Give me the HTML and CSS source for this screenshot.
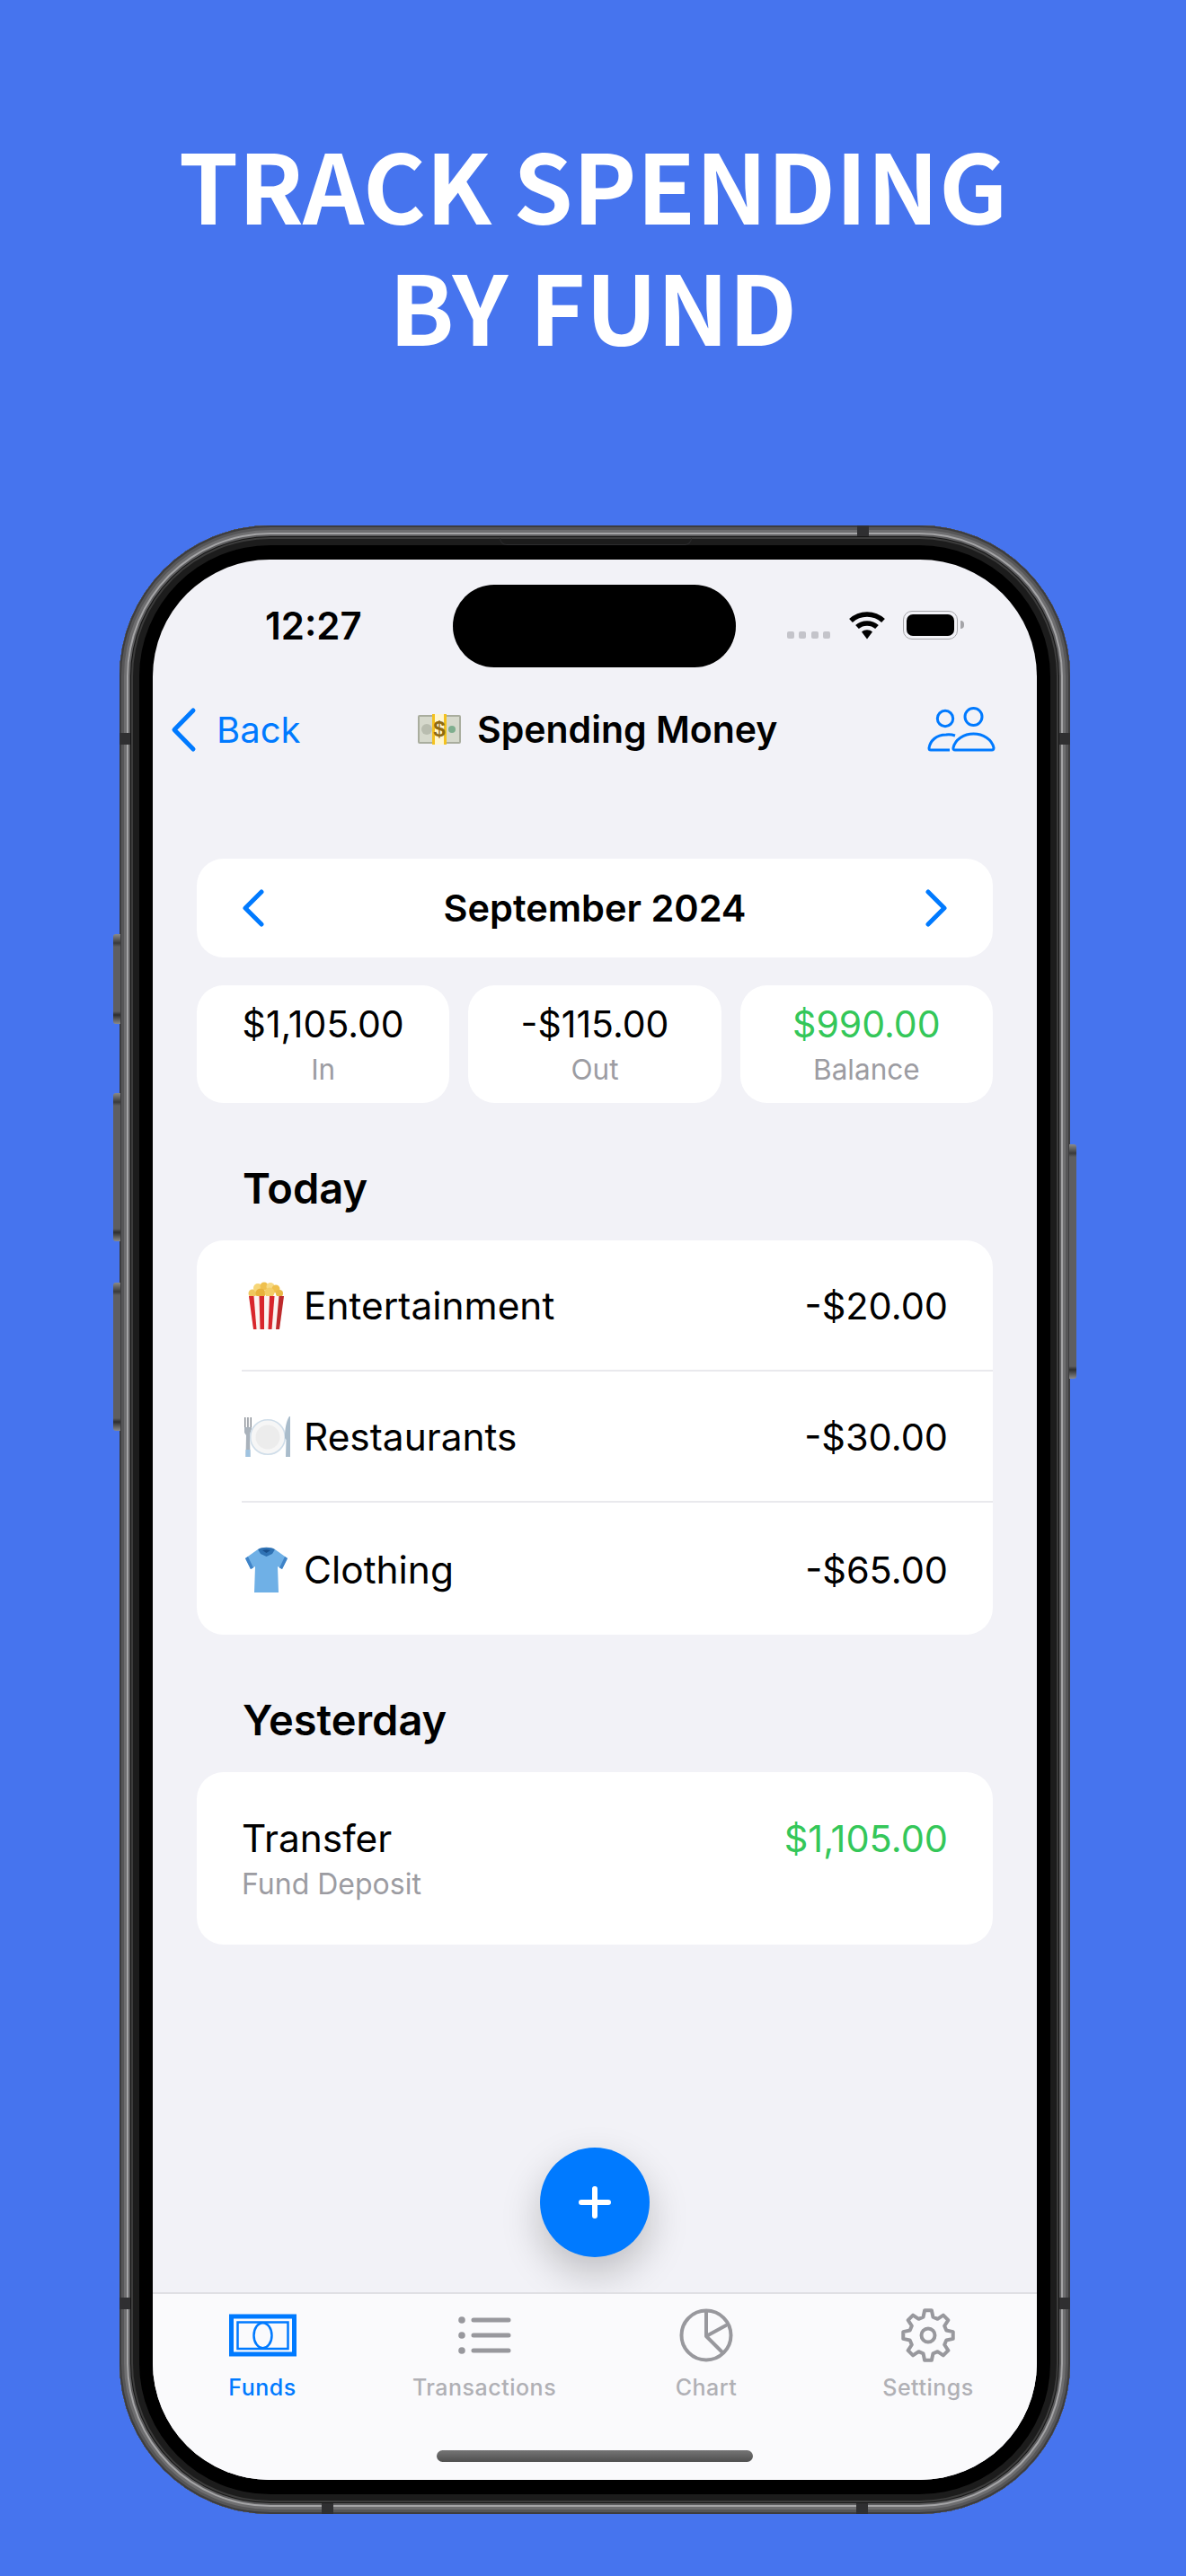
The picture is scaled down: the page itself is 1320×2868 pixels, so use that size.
FILE: index.html
```html
<!DOCTYPE html>
<html lang="en">

<head>
    <meta charset="UTF-8">
    <title>Track Spending by Fund</title>
    <link rel="stylesheet" href="styles.css">
</head>

<body>
    <h1>TRACK SPENDING<br>BY FUND</h1>

    <div class="phone">
        <!-- hardware bits that sit on the frame -->
        <span class="btn btn-mute"></span>
        <span class="btn btn-up"></span>
        <span class="btn btn-down"></span>
        <span class="btn btn-power"></span>
        <span class="band band-left-top"></span>
        <span class="band band-left-bottom"></span>
        <span class="band band-right-top"></span>
        <span class="band band-right-bottom"></span>
        <span class="band band-top"></span>
        <span class="band band-bottom-left"></span>
        <span class="band band-bottom-right"></span>
        <span class="speaker"></span>

        <div class="screen">
            <div class="island"></div>

            <div class="status">
                <span class="time">12:27</span>
                <div class="status-icons">
                    <div class="dots"><i></i><i></i><i></i><i></i></div>
                    <svg class="wifi" width="42" height="32" viewBox="0 0 41 32">
                        <path class="wifi-arc" d="M2.5 11 C12.5 1.5 28.5 1.5 38.5 11" />
                        <path class="wifi-arc" d="M9.5 18 C15.5 12.5 25.5 12.5 31.5 18" />
                        <path d="M14.5 23.5 C18 20.5 23 20.5 26.5 23.5 L20.5 31.5 Z" />
                    </svg>
                    <div class="battery"><i></i></div>
                    <span class="battery-nub"></span>
                </div>
            </div>

            <div class="nav">
                <div class="nav-back">
                    <svg class="icon-line" width="29" height="51" viewBox="0 0 29 51">
                        <path d="M25 4 L4 25.500 L25 47" />
                    </svg>
                    <span>Back</span>
                </div>
                <div class="nav-title">
                    <svg class="emoji-money" width="50" height="36" viewBox="0 0 50 36">
                        <rect x="1" y="2" width="48" height="32" rx="2" fill="#a9ad9e" />
                        <rect x="3" y="4" width="44" height="28" fill="#d6d9cc" />
                        <circle cx="11" cy="18" r="6" fill="#b9bdaf" />
                        <circle cx="39" cy="18" r="4" fill="#7fae8e" />
                        <rect x="17" y="1" width="16" height="34" fill="#fff6cf" />
                        <rect x="17" y="1" width="3" height="34" fill="#f4c21f" />
                        <rect x="30" y="1" width="3" height="34" fill="#f4c21f" />
                        <text x="25" y="26" class="emoji-dollar">$</text>
                    </svg>
                    <span>Spending Money</span>
                </div>
                <svg class="nav-people" width="76" height="50" viewBox="0 0 76 50">
                    <circle cx="20" cy="13" r="8.700" />
                    <circle cx="51.500" cy="11" r="9.500" />
                    <path d="M31 32 C28 31 24 30.500 21 31 C10 31 3 38 2 46 Q2 48 4 48 H25" />
                    <path d="M31 48 Q28.500 48 29 45.500 C31 36 41 30 51.500 30 C62 30 72 36 74 45.500 Q74 48 72 48 Z" />
                </svg>
            </div>

            <main class="content">
                <div class="month">
                    <svg class="icon-line" width="26" height="42" viewBox="0 0 26 42">
                        <path d="M22 3 L4 21 L22 39" />
                    </svg>
                    <span>September 2024</span>
                    <svg class="icon-line" width="26" height="42" viewBox="0 0 26 42">
                        <path d="M4 3 L22 21 L4 39" />
                    </svg>
                </div>

                <div class="stats">
                    <div class="stat">
                        <div class="stat-value">$1,105.00</div>
                        <div class="stat-label">In</div>
                    </div>
                    <div class="stat">
                        <div class="stat-value">-$115.00</div>
                        <div class="stat-label">Out</div>
                    </div>
                    <div class="stat">
                        <div class="stat-value green">$990.00</div>
                        <div class="stat-label">Balance</div>
                    </div>
                </div>

                <h2>Today</h2>
                <div class="card">
                    <div class="row">
                        <div class="row-emoji">
                            <svg width="52" height="54" viewBox="0 0 52 54">
                                <circle cx="12" cy="13" r="4.500" fill="#efc75e" />
                                <circle cx="18" cy="7" r="5" fill="#f6d678" />
                                <circle cx="25" cy="5" r="4.500" fill="#efc04d" />
                                <circle cx="32" cy="5.500" r="4.500" fill="#f7da85" />
                                <circle cx="38" cy="8" r="4.500" fill="#efc04d" />
                                <circle cx="42" cy="13" r="4" fill="#e9b846" />
                                <circle cx="21" cy="13" r="5.500" fill="#e8b23c" />
                                <circle cx="31" cy="12" r="5.500" fill="#f3cd66" />
                                <path d="M8 16 H47 L42 53 H13 Z" fill="#fbf3f1" />
                                <path d="M8 16 H13.500 L16.500 53 H13 Z" fill="#d8262c" />
                                <path d="M19.500 16 H25 L25 53 H20.500 Z" fill="#d8262c" />
                                <path d="M31 16 H36.500 L33.500 53 H29.500 Z" fill="#d8262c" />
                                <path d="M41.500 16 H47 L42 53 H38 Z" fill="#bd2a2c" />
                            </svg>
                        </div>
                        <span class="row-name">Entertainment</span>
                        <span class="row-amount">-$20.00</span>
                    </div>
                    <div class="row">
                        <div class="row-emoji">
                            <svg width="55" height="48" viewBox="0 0 55 48">
                                <rect x="3" y="2" width="1.500" height="14" fill="#8d9299" />
                                <rect x="6.200" y="2" width="1.500" height="14" fill="#8d9299" />
                                <rect x="9.500" y="2" width="1.500" height="14" fill="#8d9299" />
                                <path d="M3 13 H11 V19 L9 22 L9.500 46 H4.500 L5 22 L3 19 Z" fill="#a9b2bb" />
                                <path d="M4.500 38 H9.500 V46 H4.500 Z" fill="#9fc3e0" />
                                <circle cx="29" cy="24" r="20" fill="#f6f6f6" />
                                <circle cx="29" cy="24" r="19.300" fill="none" stroke="#cfdde9" stroke-width="1.500" />
                                <circle cx="29" cy="24" r="13.500" fill="#ececec" />
                                <path d="M53 1 C50 5 48 14 48 25 L49.500 27 L49 46 H54 V1 Z" fill="#a9bccb" />
                            </svg>
                        </div>
                        <span class="row-name">Restaurants</span>
                        <span class="row-amount">-$30.00</span>
                    </div>
                    <div class="row">
                        <div class="row-emoji">
                            <svg width="54" height="52" viewBox="0 0 54 52">
                                <path d="M18 3 L4 13 L10 25 L15 22 L14 51 H41 L40 22 L45 25 L51 13 L37 3 Z" fill="#6fb0e6" />
                                <path d="M4 13 L10 25 L13 23.500 L7 11 Z M51 13 L45 25 L42 23.500 L48 11 Z" fill="#3f83c7" />
                                <path d="M18 3 C22 0 33 0 37 3 L34 8 L27.500 11 L21 8 Z" fill="#2f72b4" />
                                <path d="M23 4 C26 3 29 3 32 4 L27.500 7 Z" fill="#184f8c" />
                            </svg>
                        </div>
                        <span class="row-name">Clothing</span>
                        <span class="row-amount">-$65.00</span>
                    </div>
                </div>

                <h2>Yesterday</h2>
                <div class="card card-transfer">
                    <div class="transfer-text">
                        <div class="row-name">Transfer</div>
                        <div class="transfer-sub">Fund Deposit</div>
                    </div>
                    <span class="row-amount green">$1,105.00</span>
                </div>

                <button class="fab">
                    <svg width="36" height="36" viewBox="0 0 36 36">
                        <path d="M18 3 V33 M3 18 H33" />
                    </svg>
                </button>
            </main>

            <div class="tabbar">
                <div class="tab active">
                    <svg width="75" height="62" viewBox="0 -7.500 75 62">
                        <rect x="2.500" y="2.500" width="70" height="42" stroke-width="5" />
                        <rect x="9.500" y="9" width="56" height="29.500" stroke-width="2.500" />
                        <ellipse cx="37.500" cy="23.700" rx="10" ry="14" stroke-width="2.500" />
                    </svg>
                    <span>Funds</span>
                </div>
                <div class="tab">
                    <svg width="62" height="62" viewBox="0 -7 62 62">
                        <circle class="solid" cx="6" cy="7" r="3.800" />
                        <circle class="solid" cx="6" cy="24" r="3.800" />
                        <circle class="solid" cx="6" cy="41" r="3.800" />
                        <path d="M19 7 H58 M19 24 H58 M19 41 H58" stroke-width="5" />
                    </svg>
                    <span>Transactions</span>
                </div>
                <div class="tab">
                    <svg width="62" height="62" viewBox="-1 -1 62 62">
                        <circle cx="30" cy="30" r="27.500" stroke-width="4" />
                        <path d="M30 3 V31 L52 19 M30 31 L48 49" stroke-width="4" />
                    </svg>
                    <span>Chart</span>
                </div>
                <div class="tab">
                    <svg width="62" height="62" viewBox="-1 -1 62 62">
                        <polygon stroke-width="4" points="24.56,9.72 26.1,2.27 33.9,2.27 35.44,9.72 40.5,11.81 46.85,7.64 52.36,13.15 48.19,19.5 50.28,24.56 57.73,26.1 57.73,33.9 50.28,35.44 48.19,40.5 52.36,46.85 46.85,52.36 40.5,48.19 35.44,50.28 33.9,57.73 26.1,57.73 24.56,50.28 19.5,48.19 13.15,52.36 7.64,46.85 11.81,40.5 9.72,35.44 2.27,33.9 2.27,26.1 9.72,24.56 11.81,19.5 7.64,13.15 13.15,7.64 19.5,11.81" />
                        <circle cx="30" cy="30" r="7.500" stroke-width="4" />
                    </svg>
                    <span>Settings</span>
                </div>
                <div class="home-bar"></div>
            </div>
        </div>
    </div>
</body>

</html>
```

FILE: styles.css
```css
* {
    margin: 0;
    padding: 0;
    box-sizing: border-box;
}

body {
    width: 1320px;
    height: 2868px;
    overflow: hidden;
    background-color: #4674ee;
    font-family: Inter, "Liberation Sans", sans-serif;
    color: #000;
}

h1 {
    padding-top: 136px;
    font-family: "Noto Sans CJK SC", "Noto Sans", sans-serif;
    font-size: 106.5px;
    font-weight: 700;
    line-height: 135px;
    text-align: center;
    color: #fff;
}

/* phone frame */

.phone {
    position: relative;
    width: 1058px;
    height: 2214px;
    margin: 179px 0 0 133px;
    padding: 38px 37px;
    background-color: #000;
    border-radius: 168px;
    box-shadow:
        inset 0 0 0 2px #3c3c3e,
        inset 0 0 0 5px #565658,
        inset 0 0 0 8px #6e6e70,
        inset 0 0 0 10px #a4a4a6,
        inset 0 0 0 12px #5c5c5e,
        inset 0 0 0 13px #161616,
        inset 0 0 0 15px #3c3c3c,
        inset 0 0 0 22px #1c1c1c;
}

.btn {
    position: absolute;
    width: 8px;
    background: linear-gradient(to bottom, #8a8a8a 0, #3a3a3a 10px, #5e5e60 14px, #5e5e60 calc(100% - 14px), #2e2e2e calc(100% - 10px), #8a8a8a 100%);
}

.btn-mute,
.btn-up,
.btn-down {
    left: -7px;
    border-radius: 3px 0 0 3px;
}

.btn-mute {
    top: 455px;
    height: 100px;
}

.btn-up {
    top: 632px;
    height: 165px;
}

.btn-down {
    top: 843px;
    height: 165px;
}

.btn-power {
    top: 689px;
    right: -7px;
    height: 261px;
    border-radius: 0 3px 3px 0;
}

.band {
    position: absolute;
    background-color: #2f2f31;
}

.band-left-top,
.band-left-bottom,
.band-right-top,
.band-right-bottom {
    width: 12px;
    height: 13px;
}

.band-left-top,
.band-right-top {
    top: 231px;
}

.band-left-bottom,
.band-right-bottom {
    top: 1973px;
}

.band-left-top,
.band-left-bottom {
    left: 0;
}

.band-right-top,
.band-right-bottom {
    right: 0;
}

.band-top,
.band-bottom-left,
.band-bottom-right {
    width: 13px;
    height: 12px;
}

.band-top {
    top: 0;
    left: 821px;
}

.band-bottom-left {
    bottom: 0;
    left: 225px;
}

.band-bottom-right {
    bottom: 0;
    right: 225px;
}

.speaker {
    position: absolute;
    top: 14px;
    left: 423px;
    width: 214px;
    height: 8px;
    border: 1px solid #2c2c2e;
    border-top: none;
    border-radius: 0 0 8px 8px;
}

.screen {
    position: relative;
    display: flex;
    flex-direction: column;
    height: 100%;
    background-color: #f2f2f7;
    border-radius: 130px;
    overflow: hidden;
}

.island {
    position: absolute;
    top: 28px;
    left: 334px;
    width: 315px;
    height: 92px;
    background-color: #000;
    border-radius: 46px;
}

/* status bar */

.status {
    display: flex;
    justify-content: space-between;
    align-items: flex-start;
    height: 145px;
    padding: 50px 81px 0 125px;
}

.time {
    font-size: 42px;
    font-weight: 600;
    line-height: 48px;
}

.status-icons {
    display: flex;
    align-items: flex-start;
    padding-top: 7px;
}

.dots {
    display: flex;
    gap: 5.5px;
    margin: 23px 20px 0 0;
}

.dots i {
    width: 8px;
    height: 8px;
    background-color: #c4c4ca;
    border-radius: 2px;
}

.wifi {
    margin-right: 19px;
}

.wifi-arc {
    fill: none;
    stroke: #000;
    stroke-width: 5.500;
}

.battery {
    width: 61px;
    height: 32px;
    padding: 3px;
    border: 1.500px solid #a4a4a8;
    border-radius: 10px;
}

.battery i {
    display: block;
    height: 100%;
    background-color: #000;
    border-radius: 7px;
}

.battery-nub {
    width: 4px;
    height: 9px;
    margin: 11px 0 0 3px;
    background-color: #a4a4a8;
    border-radius: 0 4px 4px 0;
}

/* nav bar */

.nav {
    position: relative;
    display: flex;
    justify-content: space-between;
    align-items: center;
    height: 88px;
    padding: 0 46px 0 20px;
}

.icon-line path {
    fill: none;
    stroke: #007aff;
    stroke-width: 5;
    stroke-linecap: round;
    stroke-linejoin: round;
}

.nav-back {
    display: flex;
    align-items: center;
    gap: 22px;
    font-size: 40px;
    color: #007aff;
}

.nav-title {
    position: absolute;
    top: 0;
    left: 294px;
    display: flex;
    align-items: center;
    gap: 17px;
    height: 100%;
    font-size: 41px;
    font-weight: 600;
}

.emoji-dollar {
    font-family: "Liberation Sans", sans-serif;
    font-size: 24px;
    font-weight: 700;
    text-anchor: middle;
    fill: #8f6a12;
}

.nav-people * {
    fill: none;
    stroke: #007aff;
    stroke-width: 3;
}

/* main content */

.content {
    position: relative;
    flex: 1;
    padding: 100px 49px 0;
}

.month {
    display: flex;
    justify-content: space-between;
    align-items: center;
    height: 110px;
    padding: 0 50px;
    font-size: 41.5px;
    font-weight: 600;
    background-color: #fff;
    border-radius: 30px;
}

.stats {
    display: grid;
    grid-template-columns: repeat(3, 1fr);
    gap: 21px;
    margin-top: 31px;
}

.stat {
    height: 131px;
    padding-top: 19px;
    text-align: center;
    background-color: #fff;
    border-radius: 30px;
}

.stat-value {
    font-size: 41px;
    line-height: 48px;
}

.stat-label {
    margin-top: 7px;
    font-size: 31.500px;
    line-height: 40px;
    color: #9c9ca2;
}

.green {
    color: #34c759;
}

h2 {
    margin: 67px 0 30px 51px;
    font-size: 47px;
    font-weight: 600;
    line-height: 56px;
}

.card {
    padding-left: 50px;
    background-color: #fff;
    border-radius: 30px;
}

.row {
    display: flex;
    align-items: center;
    height: 146px;
    padding: 2px 50px 0 0;
    border-bottom: 2px solid #e9e9ed;
}

.row:last-child {
    height: 147px;
    border-bottom: none;
}

.row-emoji {
    display: flex;
    align-items: center;
    width: 69px;
}

.row-name {
    flex: 1;
    font-size: 42.4px;
    line-height: 48px;
}

.row-amount {
    font-size: 41.5px;
    line-height: 48px;
}

.card-transfer {
    display: flex;
    justify-content: space-between;
    align-items: flex-start;
    height: 192px;
    padding: 50px 50px 0;
}

.transfer-sub {
    margin-top: 7px;
    font-size: 32px;
    line-height: 40px;
    color: #9c9ca2;
}

.fab {
    position: absolute;
    bottom: 39px;
    left: 431px;
    display: flex;
    justify-content: center;
    align-items: center;
    width: 122px;
    height: 122px;
    background-color: #007aff;
    border: none;
    border-radius: 50%;
    box-shadow: 0 18px 44px rgba(0, 0, 0, 0.22);
}

.fab path {
    fill: none;
    stroke: #fff;
    stroke-width: 6;
    stroke-linecap: round;
}

/* tab bar */

.tabbar {
    position: relative;
    display: grid;
    grid-template-columns: repeat(4, 247px);
    height: 209px;
    background-color: #fafafc;
    border-top: 2px solid #e0e0e4;
}

.tab {
    display: flex;
    flex-direction: column;
    align-items: center;
    padding: 15px 3px 0 0;
    font-size: 25px;
    font-weight: 500;
    letter-spacing: 0.5px;
    color: #b0b0b5;
}

.tab svg * {
    fill: none;
    stroke: #98989d;
    stroke-linecap: round;
    stroke-linejoin: round;
}

.tab svg .solid {
    fill: #98989d;
    stroke: none;
}

.tab span {
    margin-top: 11px;
    line-height: 32px;
}

.tab.active {
    color: #007aff;
}

.tab.active svg * {
    stroke: #007aff;
    stroke-linejoin: miter;
}

.home-bar {
    position: absolute;
    bottom: 20px;
    left: 316px;
    width: 352px;
    height: 13px;
    background: linear-gradient(to bottom, #757575, #4f4f4f);
    border-radius: 7px;
}
```
